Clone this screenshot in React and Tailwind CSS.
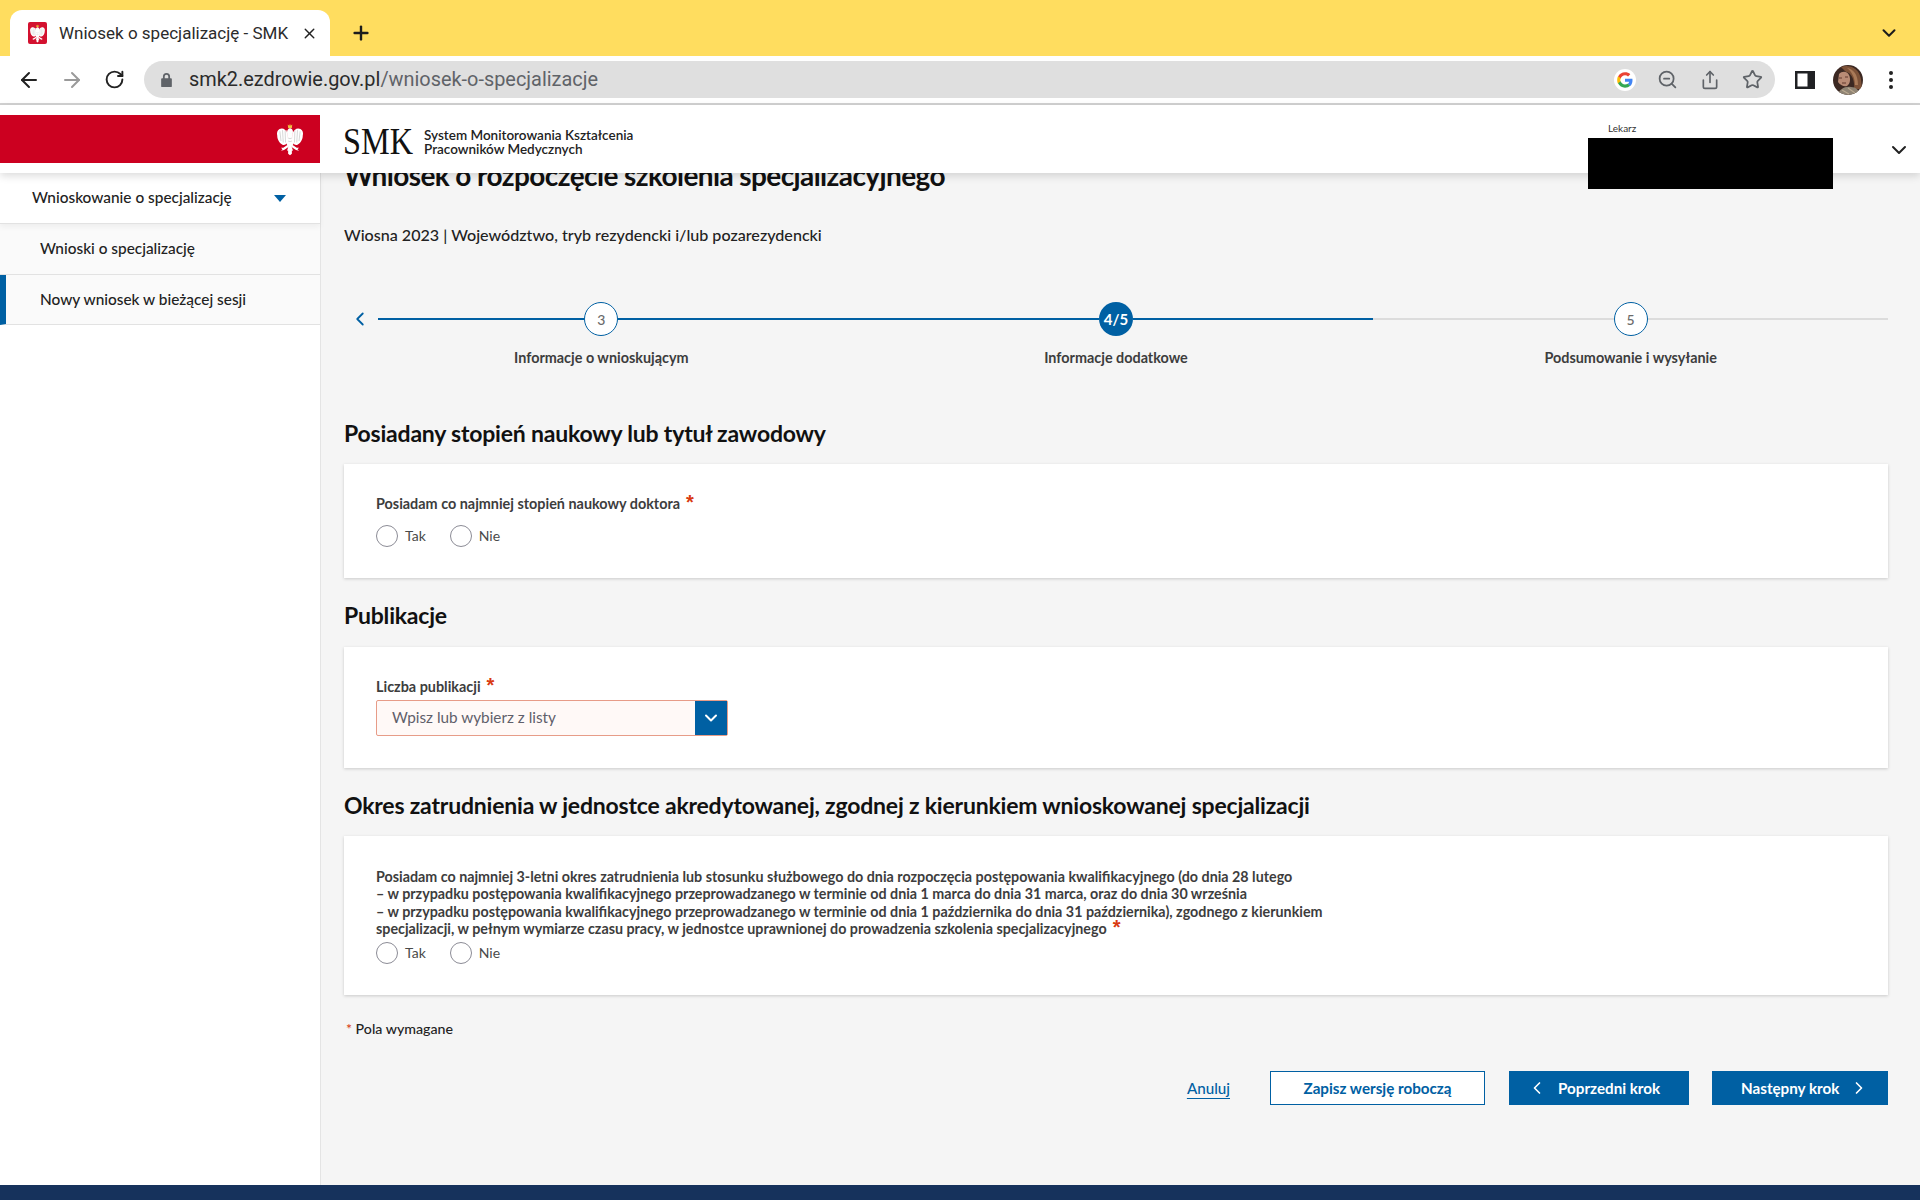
import { ArrowLeft, ArrowRight, ChevronDown, ChevronLeft, ChevronRight, Plus, RotateCw, Share, Star, X, ZoomOut } from "lucide-react";

function Eagle({ className, crown = "#e8b830" }) {
    return (
        <svg viewBox="0 0 40 44" className={className}>
            <g fill="#fff">
                {/* left wing */}
                <path d="M17 15 C15 8 10 6 6 8 C3 10 2 13 3 17 C3 22 6 27 10 29 C13 30 15 28 17 26 Z" />
                {/* right wing */}
                <path d="M23 15 C25 8 30 6 34 8 C37 10 38 13 37 17 C37 22 34 27 30 29 C27 30 25 28 23 26 Z" />
                {/* head and body */}
                <path d="M16 13 C16 9 18 7 20 7 C22 7 24 9 24 12 L23.500 16 L24.500 28 L22 32 L18 32 L15.500 28 L16.500 16 Z" />
                <path d="M16 9.500 L13.500 11 L16.500 11.500 Z" />
                {/* legs */}
                <path d="M17 29 L11 33 L8 33 L10 35 L8 37 L12 36 L18 32 Z" />
                <path d="M23 29 L29 33 L32 33 L30 35 L32 37 L28 36 L22 32 Z" />
                {/* tail */}
                <path d="M18 31 L22 31 L24 37 L22.500 36.500 L22.500 41 L20 43 L17.500 41 L17.500 36.500 L16 37 Z" />
            </g>
            <g stroke="#bdbdbd" strokeWidth="0.8" fill="none">
                <path d="M6.500 11 L8 24 M10 9.500 L11 26 M13.500 10 L14 26 M33.500 11 L32 24 M30 9.500 L29 26 M26.500 10 L26 26" />
                <path d="M17.500 20 C19 21 21 21 22.500 20 M17.500 24 C19 25 21 25 22.500 24" />
            </g>
            <path d="M17.500 6.500 L17 2 L19 3.500 L20 1 L21 3.500 L23 2 L22.500 6.500 Z" fill={crown} />
        </svg>
    );
}

function GoogleG() {
    return (
        <svg viewBox="0 0 48 48" className="w-[16px] h-[16px]">
            <path fill="#ea4335" d="M24 10c3.500 0 6.600 1.200 9.100 3.500l6.800-6.800C35.800 2.900 30.400 1 24 1 14.800 1 6.900 6.300 3 14l7.900 6.100C12.800 14.300 17.900 10 24 10z" />
            <path fill="#4285f4" d="M46.500 24.500c0-1.600-.1-3.100-.4-4.500H24v9h12.700c-.6 2.900-2.200 5.400-4.700 7.100l7.700 6c4.500-4.200 6.800-10.300 6.800-17.600z" />
            <path fill="#fbbc05" d="M10.900 28.900c-.5-1.500-.8-3.200-.8-4.900s.3-3.400.8-4.900L3 13C1.400 16.300.5 20 .5 24s.9 7.700 2.500 11l7.900-6.100z" />
            <path fill="#34a853" d="M24 47c6.400 0 11.700-2.100 15.700-5.800l-7.700-6c-2.100 1.400-4.800 2.300-8 2.300-6.100 0-11.200-4.100-13.100-9.700L3 33.900C6.900 41.700 14.800 47 24 47z" />
        </svg>
    );
}

function Avatar() {
    return (
        <svg viewBox="0 0 30 30" className="w-[30px] h-[30px] rounded-full">
            <rect width="30" height="30" fill="#3b2822" />
            <path d="M8 2 C16 -1 26 3 28 14 L29 24 L21 24 C22 16 19 8 13 7 Z" fill="#7d5238" />
            <path d="M14 3 C20 4 25 9 25 20 L22 20 C22 13 19 7 14 3 Z" fill="#a97a58" />
            <path d="M6 9 C9 6 14 6 16 10 C18 14 17 19 14 21 C11 22 7 20 5 17 Z" fill="#b98b75" />
            <path d="M6 13 h3 M12 12 h3 M9 18 h4" stroke="#5a2f26" strokeWidth="0.9" />
            <path d="M5 30 C6 24 12 21 18 22 C23 22 26 25 27 30 Z" fill="#8f8474" />
            <path d="M9 25 L16 29 M15 23 L22 28" stroke="#b9a88f" strokeWidth="1.2" />
        </svg>
    );
}

function Radio({ label }) {
    return (
        <label className="flex items-center">
            <span className="w-[22px] h-[22px] rounded-full border border-[#8c8c96] bg-white" />
            <span className="ml-[7px] text-[14px] leading-[20px] text-[#4a4a4a]">{label}</span>
        </label>
    );
}

function RadioGroup() {
    return (
        <div className="flex items-center gap-[24px]">
            <Radio label="Tak" />
            <Radio label="Nie" />
        </div>
    );
}

function Req() {
    return <span className="ml-[6px] font-['Liberation_Sans',sans-serif] text-[20px] leading-[14px] font-bold text-[#d93a12]">*</span>;
}

function SectionTitle({ children, className }) {
    return <h2 className={`text-[23px] leading-[30px] font-bold text-[#111] tracking-[-0.2px] ${className}`}>{children}</h2>;
}

function Card({ children, className }) {
    return <div className={`bg-white shadow-[0_1px_3px_rgba(0,0,0,0.18)] px-[32px] ${className}`}>{children}</div>;
}

function Step({ number, label, active, lineClass, first }) {
    return (
        <div className="flex flex-col items-center">
            <div className="flex items-center w-full h-[34px]">
                <div className="flex-1 flex items-center">
                    {first && (
                        <div className="w-[34px] shrink-0">
                            <ChevronLeft size={22} strokeWidth={2} className="text-[#0060a3] ml-[5px]" />
                        </div>
                    )}
                    <div className={`flex-1 h-[2px] ${lineClass}`} />
                </div>
                <div
                    className={`w-[34px] h-[34px] shrink-0 rounded-full flex items-center justify-center ${
                        active ? "bg-[#0060a3] text-white text-[15px] font-bold" : "bg-white border border-[#0060a3] text-[14px] font-medium text-[#6b6b6b]"
                    }`}
                >
                    {number}
                </div>
                <div className={`flex-1 h-[2px] ${lineClass}`} />
            </div>
            <div className="mt-[12px] text-[14.400px] leading-[20px] font-bold text-[#3d3d3d]">{label}</div>
        </div>
    );
}

function BrowserChrome() {
    return (
        <div className="shrink-0 font-['Roboto',sans-serif]">
            <div className="h-[56px] bg-[#ffdd5f] flex items-end pl-[10px] pr-[20px]">
                <div className="w-[320px] h-[46px] bg-white rounded-t-[12px] flex items-center pl-[18px] pr-[12px]">
                    <div className="w-[19px] h-[22px] bg-[#d3112f] rounded-[2px] flex items-center justify-center shrink-0">
                        <Eagle className="w-[17px] h-[19px]" />
                    </div>
                    <span className="ml-[12px] mt-[1px] text-[17px] text-[#2b2b2b] flex-1 whitespace-nowrap">Wniosek o specjalizację - SMK</span>
                    <X size={17} strokeWidth={2} className="text-[#222]" />
                </div>
                <div className="ml-[20px] h-[46px] flex items-center">
                    <Plus size={22} strokeWidth={2.6} className="text-[#1c1c1c]" />
                </div>
                <div className="ml-auto h-[46px] flex items-center">
                    <ChevronDown size={22} strokeWidth={2.2} className="text-[#1c1c1c]" />
                </div>
            </div>
            <div className="h-[49px] bg-white border-b-2 border-[#d2d2d2] flex items-center pl-[17px] pr-[24px]">
                <ArrowLeft size={24} strokeWidth={2} className="text-[#222]" />
                <ArrowRight size={24} strokeWidth={2} className="ml-[19px] text-[#9a9a9a]" />
                <RotateCw size={21} strokeWidth={2.2} className="ml-[20px] text-[#222]" />
                <div className="ml-[19px] w-[1631px] h-[37px] rounded-full bg-[#dfdfdf] flex items-center pl-[16px] pr-[12px]">
                    <svg viewBox="0 0 14 18" className="w-[13px] h-[16px] fill-[#5f6368]">
                        <path d="M3 7 V5 a4 4 0 0 1 8 0 V7 h1 a1 1 0 0 1 1 1 v8 a1 1 0 0 1 -1 1 H2 a1 1 0 0 1 -1 -1 V8 a1 1 0 0 1 1 -1 Z M5 7 h4 V5 a2 2 0 0 0 -4 0 Z" />
                    </svg>
                    <span className="ml-[16px] mt-[1px] text-[19.900px] text-[#2b2b2b]">
                        smk2.ezdrowie.gov.pl<span className="text-[#5f6368]">/wniosek-o-specjalizacje</span>
                    </span>
                    <div className="ml-auto flex items-center">
                        <div className="w-[22px] h-[22px] rounded-full bg-white flex items-center justify-center">
                            <GoogleG />
                        </div>
                        <ZoomOut size={21} strokeWidth={2} className="ml-[21px] text-[#5f6368]" />
                        <Share size={20} strokeWidth={2} className="ml-[22px] text-[#5f6368]" />
                        <Star size={21} strokeWidth={2} className="ml-[22px] text-[#5f6368]" />
                    </div>
                </div>
                <svg viewBox="0 0 20 18" className="ml-[20px] w-[20px] h-[18px] shrink-0">
                    <rect width="20" height="18" fill="#202124" />
                    <rect x="2.500" y="2.500" width="10" height="13" fill="#fff" />
                </svg>
                <div className="ml-[18px] shrink-0 flex">
                    <Avatar />
                </div>
                <div className="ml-[26px] flex flex-col gap-[3px] shrink-0">
                    <span className="w-[4px] h-[4px] rounded-full bg-[#222]" />
                    <span className="w-[4px] h-[4px] rounded-full bg-[#222]" />
                    <span className="w-[4px] h-[4px] rounded-full bg-[#222]" />
                </div>
            </div>
        </div>
    );
}

function AppHeader() {
    return (
        <header className="relative z-10 h-[68px] shrink-0 bg-white shadow-[0_3px_8px_rgba(0,0,0,0.14)] flex items-start">
            <div className="mt-[10px] w-[320px] h-[48px] bg-[#cc0020] flex items-center justify-end pr-[15px] shrink-0">
                <Eagle className="w-[30px] h-[33px]" crown="#efc040" />
            </div>
            <div className="mt-[19px] ml-[23px] flex items-center">
                <span className="w-[69px] font-['Liberation_Serif',serif] text-[38px] leading-[34px] text-[#111] scale-x-[0.85] origin-left">SMK</span>
                <div className="ml-[12px] mt-[2px] text-[13.500px] leading-[14.500px] font-semibold text-[#222]">
                    <div>System Monitorowania Kształcenia</div>
                    <div>Pracowników Medycznych</div>
                </div>
            </div>
            <div className="ml-auto mt-[13px] w-[245px] mr-[87px]">
                <div className="pl-[20px] text-[10px] leading-[20px] text-[#333]">Lekarz</div>
                <div className="h-[51px] bg-black" />
            </div>
            <ChevronDown size={24} strokeWidth={2} className="absolute right-[9px] top-[33px] text-[#222]" />
        </header>
    );
}

function Sidebar() {
    return (
        <aside className="w-[321px] shrink-0 bg-white border-r border-[#e4e4e4] text-[15.400px] font-medium text-[#222]">
            <div className="relative h-[51px] pl-[32px] pr-[34px] flex items-center justify-between border-b border-[#e2e2e2] shadow-[0_3px_6px_rgba(0,0,0,0.05)]">
                <span>Wnioskowanie o specjalizację</span>
                <svg viewBox="0 0 12 7" className="w-[12px] h-[7px] fill-[#0060a3]">
                    <path d="M0 0 H12 L6 7 Z" />
                </svg>
            </div>
            <div className="h-[51px] pl-[40px] flex items-center bg-[#fafafa] border-b border-[#e2e2e2]">Wnioski o specjalizację</div>
            <div className="h-[50px] pl-[34px] flex items-center bg-[#fafafa] border-b border-[#e2e2e2] border-l-[6px] border-l-[#0060a3]">
                Nowy wniosek w bieżącej sesji
            </div>
        </aside>
    );
}

export default function App() {
    return (
        <div className="h-screen flex flex-col overflow-hidden bg-[#f5f5f5] font-['Lato',sans-serif]">
            <BrowserChrome />
            <AppHeader />
            <div className="flex-1 flex min-h-0">
                <Sidebar />
                <main className="flex-1 overflow-hidden pl-[23px] pr-[32px]">
                    {/* scrolled a bit, title goes under the header */}
                    <h1 className="-mt-[15px] text-[28px] leading-[34px] font-bold tracking-[-0.6px] text-[#111]">Wniosek o rozpoczęcie szkolenia specjalizacyjnego</h1>
                    <div className="mt-[32px] text-[16.100px] leading-[22px] font-medium text-[#222]">
                        Wiosna 2023 | Województwo, tryb rezydencki i/lub pozarezydencki
                    </div>

                    <div className="mt-[56px] grid grid-cols-3">
                        <Step first number="3" label="Informacje o wnioskującym" lineClass="bg-[#0060a3]" />
                        <Step active number="4/5" label="Informacje dodatkowe" lineClass="bg-[#0060a3]" />
                        <Step number="5" label="Podsumowanie i wysyłanie" lineClass="bg-[#dcdcdc]" />
                    </div>

                    <SectionTitle className="mt-[50px]">Posiadany stopień naukowy lub tytuł zawodowy</SectionTitle>
                    <Card className="mt-[16px] h-[114px] pt-[30px]">
                        <div className="text-[14.400px] leading-[20px] font-bold text-[#3d3d3d]">
                            Posiadam co najmniej stopień naukowy doktora
                            <Req />
                        </div>
                        <div className="mt-[11px]">
                            <RadioGroup />
                        </div>
                    </Card>

                    <SectionTitle className="mt-[22px]">Publikacje</SectionTitle>
                    <Card className="mt-[17px] h-[121px] pt-[30px]">
                        <div className="text-[14.400px] leading-[20px] font-bold text-[#3d3d3d]">
                            Liczba publikacji
                            <Req />
                        </div>
                        <div className="mt-[3px] w-[352px] h-[36px] flex border border-[#e79c88] rounded-[2px] bg-[#fff9f7]">
                            <div className="flex-1 pl-[15px] pb-[2px] flex items-center text-[15.300px] text-[#5f5f6b]">Wpisz lub wybierz z listy</div>
                            <div className="w-[32px] bg-[#0060a3] flex items-center justify-center">
                                <ChevronDown size={20} strokeWidth={2.4} className="text-white" />
                            </div>
                        </div>
                    </Card>

                    <SectionTitle className="mt-[22px]">Okres zatrudnienia w jednostce akredytowanej, zgodnej z kierunkiem wnioskowanej specjalizacji</SectionTitle>
                    <Card className="mt-[16px] h-[159px] pt-[32px]">
                        <div className="w-[970px] text-[14.300px] leading-[17.300px] font-bold text-[#3d3d3d]">
                            <div>Posiadam co najmniej 3-letni okres zatrudnienia lub stosunku służbowego do dnia rozpoczęcia postępowania kwalifikacyjnego (do dnia 28 lutego</div>
                            <div>– w przypadku postępowania kwalifikacyjnego przeprowadzanego w terminie od dnia 1 marca do dnia 31 marca, oraz do dnia 30 września</div>
                            <div>– w przypadku postępowania kwalifikacyjnego przeprowadzanego w terminie od dnia 1 października do dnia 31 października), zgodnego z kierunkiem</div>
                            <div>
                                specjalizacji, w pełnym wymiarze czasu pracy, w jednostce uprawnionej do prowadzenia szkolenia specjalizacyjnego
                                <Req />
                            </div>
                        </div>
                        <div className="mt-[5px]">
                            <RadioGroup />
                        </div>
                    </Card>

                    <div className="mt-[24px] pl-[2px] text-[14.200px] leading-[20px] font-medium text-[#222]">
                        <span className="text-[#d93a12]">*</span> Pola wymagane
                    </div>

                    <div className="mt-[32px] flex items-center justify-end text-[15.200px] font-bold">
                        <a className="text-[#0060a3] font-medium underline underline-offset-4 mr-[40px]">Anuluj</a>
                        <button className="w-[215px] h-[34px] bg-white border border-[#0060a3] text-[#0060a3] mr-[24px]">Zapisz wersję roboczą</button>
                        <button className="w-[180px] h-[34px] bg-[#0060a3] text-white flex items-center pl-[18px] gap-[11px] mr-[23px]">
                            <ChevronLeft size={20} strokeWidth={2} />
                            Poprzedni krok
                        </button>
                        <button className="w-[176px] h-[34px] bg-[#0060a3] text-white flex items-center pl-[29px] gap-[10px]">
                            Następny krok
                            <ChevronRight size={20} strokeWidth={2} />
                        </button>
                    </div>
                </main>
            </div>
            <footer className="h-[15px] shrink-0 bg-[#16325c]" />
        </div>
    );
}
